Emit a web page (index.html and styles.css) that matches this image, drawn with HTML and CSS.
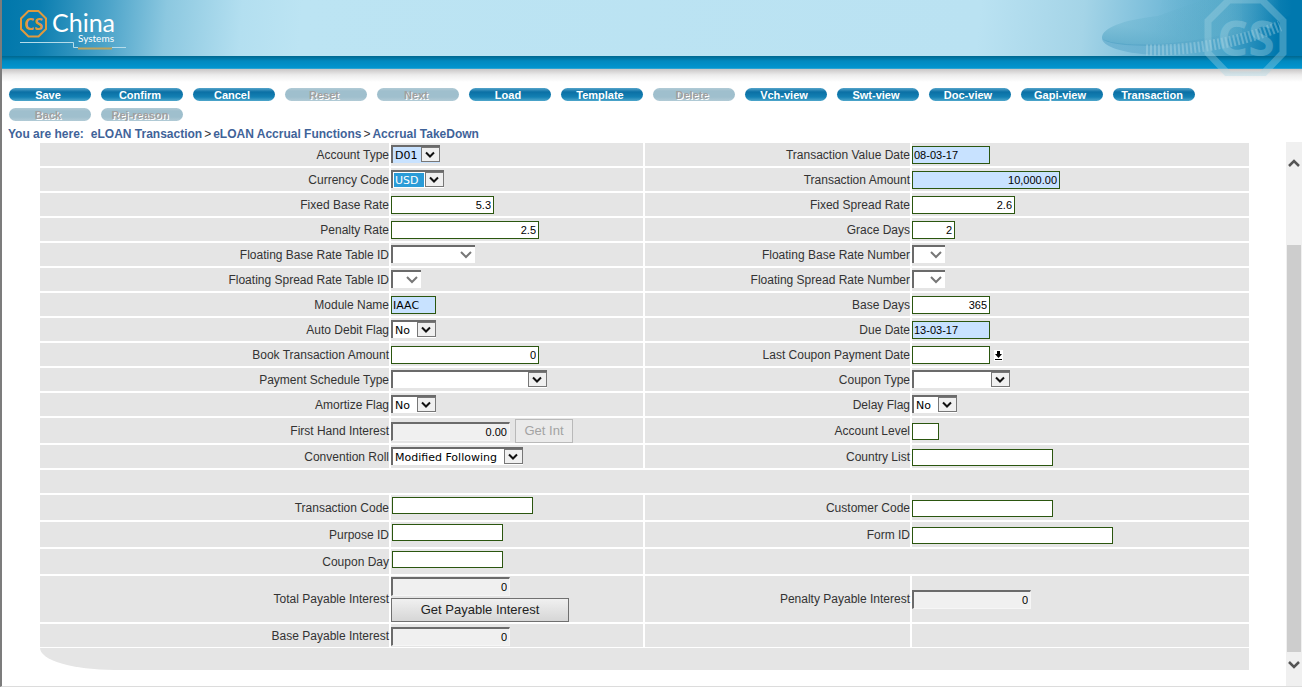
FILE: index.html
```html
<!DOCTYPE html>
<html lang="en">
<head>
<meta charset="utf-8">
<title>Accrual TakeDown</title>
<link rel="stylesheet" href="styles.css">
</head>
<body>
<header class="banner">
  <svg class="logo" width="110" height="56" viewBox="0 0 110 56" role="img" aria-label="China Systems">
    <path d="M9.500 11H19.500L27 18.500V29L19.500 36.500H9.500L2 29V18.500Z" fill="none" stroke="#e09a3e" stroke-width="2"/>
    <text x="14.500" y="29.500" text-anchor="middle" class="logo-cs">CS</text>
    <text x="33" y="32" class="logo-china">China</text>
    <text x="59" y="42" class="logo-systems">Systems</text>
    <path d="M1 42.500H54.500V47.500H59M93 47.500H107" fill="none" stroke="#b5dcea" stroke-width="1"/>
    <path d="M59 48.500H93" stroke="#bda45e" stroke-width="2"/>
  </svg>
  <svg class="watermark" width="210" height="76" viewBox="0 0 210 76" aria-hidden="true">
    <defs>
      <linearGradient id="dome" x1="0" y1="1" x2=".55" y2="0">
        <stop offset="0" stop-color="#5ba9c9" stop-opacity=".9"/>
        <stop offset=".4" stop-color="#5cacc8" stop-opacity=".35"/>
        <stop offset="1" stop-color="#5cacc8" stop-opacity=".1"/>
      </linearGradient>
      <linearGradient id="rim" x1="0" y1="0" x2="1" y2="0">
        <stop offset="0" stop-color="#4c9dc3" stop-opacity=".5"/>
        <stop offset="1" stop-color="#4c9dc3" stop-opacity="0"/>
      </linearGradient>
      <linearGradient id="glow" x1="0" y1="0" x2="1" y2="0">
        <stop offset="0" stop-color="#6ab4cf" stop-opacity="0"/>
        <stop offset=".5" stop-color="#62b0cc" stop-opacity=".5"/>
        <stop offset="1" stop-color="#62b0cc" stop-opacity="0"/>
      </linearGradient>
    </defs>
    <path d="M70 0H200V14C160 36 110 44 60 44Z" fill="url(#glow)"/>
    <path d="M10 38C10 28 30 20 66 16L110 0H150V36C110 44 85 46 60 46C25 46 12 42 10 38Z" fill="url(#dome)"/>
    <path d="M10 38C18 48 110 50 194 15V28C150 48 100 56 62 55C28 53 10 46 10 38Z" fill="url(#rim)"/>
    <path d="M54 50C100 51 150 42 188 26" fill="none" stroke="#c2e1ec" stroke-opacity=".35" stroke-width="11" stroke-dasharray="2 2"/>
    <g class="seal">
      <path d="M137 0H170L191 21V53L170 75H137L116 53V21Z" fill="none" stroke="#a8d6e4" stroke-width="7"/>
      <text x="154" y="56" text-anchor="middle" class="seal-text">CS</text>
    </g>
  </svg>
</header>

<nav class="toolbar" aria-label="Actions">
  <button type="button">Save</button>
  <button type="button">Confirm</button>
  <button type="button">Cancel</button>
  <button type="button" disabled>Reset</button>
  <button type="button" disabled>Next</button>
  <button type="button">Load</button>
  <button type="button">Template</button>
  <button type="button" disabled>Delete</button>
  <button type="button">Vch-view</button>
  <button type="button">Swt-view</button>
  <button type="button">Doc-view</button>
  <button type="button">Gapi-view</button>
  <button type="button">Transaction</button>
  <button type="button" disabled>Back</button>
  <button type="button" disabled>Rej-reason</button>
</nav>

<nav class="crumbs" aria-label="Breadcrumb">
  <span class="here">You are here:</span>
  <a href="#">eLOAN Transaction</a>
  <span class="sep">&gt;</span>
  <a href="#">eLOAN Accrual Functions</a>
  <span class="sep">&gt;</span>
  <a href="#">Accrual TakeDown</a>
</nav>

<main class="workspace">
  <form class="form">
    <div class="row">
      <label for="acct-type">Account Type</label>
      <div class="field"><select id="acct-type" class="w49 required"><option>D01</option></select></div>
      <label for="value-date">Transaction Value Date</label>
      <div class="field"><input id="value-date" class="w78 required" value="08-03-17"></div>
    </div>
    <div class="row">
      <label for="currency">Currency Code</label>
      <div class="field"><select id="currency" class="w53 selected"><option>USD</option></select></div>
      <label for="amount">Transaction Amount</label>
      <div class="field"><input id="amount" class="w148 required num" value="10,000.00"></div>
    </div>
    <div class="row">
      <label for="base-rate">Fixed Base Rate</label>
      <div class="field"><input id="base-rate" class="w103 num" value="5.3"></div>
      <label for="spread-rate">Fixed Spread Rate</label>
      <div class="field"><input id="spread-rate" class="w103 num" value="2.6"></div>
    </div>
    <div class="row">
      <label for="penalty-rate">Penalty Rate</label>
      <div class="field"><input id="penalty-rate" class="w148 num" value="2.5"></div>
      <label for="grace">Grace Days</label>
      <div class="field"><input id="grace" class="w43 num" value="2"></div>
    </div>
    <div class="row">
      <label for="fbr-table">Floating Base Rate Table ID</label>
      <div class="field"><select id="fbr-table" class="w84" disabled><option></option></select></div>
      <label for="fbr-number">Floating Base Rate Number</label>
      <div class="field"><select id="fbr-number" class="w33" disabled><option></option></select></div>
    </div>
    <div class="row">
      <label for="fsr-table">Floating Spread Rate Table ID</label>
      <div class="field"><select id="fsr-table" class="w30" disabled><option></option></select></div>
      <label for="fsr-number">Floating Spread Rate Number</label>
      <div class="field"><select id="fsr-number" class="w33" disabled><option></option></select></div>
    </div>
    <div class="row">
      <label for="module">Module Name</label>
      <div class="field"><input id="module" class="w45 required wide-face" value="IAAC"></div>
      <label for="base-days">Base Days</label>
      <div class="field"><input id="base-days" class="w78 num" value="365"></div>
    </div>
    <div class="row">
      <label for="auto-debit">Auto Debit Flag</label>
      <div class="field"><select id="auto-debit" class="w45"><option>No</option></select></div>
      <label for="due-date">Due Date</label>
      <div class="field"><input id="due-date" class="w78 required" value="13-03-17"></div>
    </div>
    <div class="row">
      <label for="book-amount">Book Transaction Amount</label>
      <div class="field"><input id="book-amount" class="w148 num" value="0"></div>
      <label for="last-coupon">Last Coupon Payment Date</label>
      <div class="field">
        <input id="last-coupon" class="w78">
        <button type="button" class="picker" aria-label="Pick date">
          <svg width="9" height="11" viewBox="0 0 9 11"><path d="M3 1H6V4H8L4.500 8L1 4H3Z M1 9H8V10H1Z" fill="#000"/></svg>
        </button>
      </div>
    </div>
    <div class="row">
      <label for="schedule">Payment Schedule Type</label>
      <div class="field"><select id="schedule" class="w156"><option></option></select></div>
      <label for="coupon-type">Coupon Type</label>
      <div class="field"><select id="coupon-type" class="w98"><option></option></select></div>
    </div>
    <div class="row">
      <label for="amortize">Amortize Flag</label>
      <div class="field"><select id="amortize" class="w45"><option>No</option></select></div>
      <label for="delay">Delay Flag</label>
      <div class="field"><select id="delay" class="w45"><option>No</option></select></div>
    </div>
    <div class="row mid">
      <label for="first-hand">First Hand Interest</label>
      <div class="field"><input id="first-hand" class="w119 num" value="0.00" readonly><button type="button" class="get-int" disabled>Get Int</button></div>
      <label for="acct-level">Account Level</label>
      <div class="field"><input id="acct-level" class="w27 short"></div>
    </div>
    <div class="row">
      <label for="convention">Convention Roll</label>
      <div class="field"><select id="convention" class="w132"><option>Modified Following</option></select></div>
      <label for="country">Country List</label>
      <div class="field"><input id="country" class="w141 short"></div>
    </div>
    <div class="row"><div class="blank full"></div></div>
    <div class="row mid">
      <label for="txn-code">Transaction Code</label>
      <div class="field raised"><input id="txn-code" class="w141 short"></div>
      <label for="customer">Customer Code</label>
      <div class="field"><input id="customer" class="w141 short"></div>
    </div>
    <div class="row mid">
      <label for="purpose">Purpose ID</label>
      <div class="field raised"><input id="purpose" class="w111 short"></div>
      <label for="form-id">Form ID</label>
      <div class="field"><input id="form-id" class="w201 short"></div>
    </div>
    <div class="row mid">
      <label for="coupon-day">Coupon Day</label>
      <div class="field raised"><input id="coupon-day" class="w111 short"></div>
      <div class="blank half"></div>
    </div>
    <div class="row">
      <label for="total-payable">Total Payable Interest</label>
      <div class="field stacked">
        <input id="total-payable" class="w119 num" value="0" readonly>
        <button type="button" class="get-payable">Get Payable Interest</button>
      </div>
      <label for="penalty-payable">Penalty Payable Interest</label>
      <div class="field"><input id="penalty-payable" class="w119 num" value="0" readonly></div>
    </div>
    <div class="row last">
      <label for="base-payable">Base Payable Interest</label>
      <div class="field"><input id="base-payable" class="w119 num" value="0" readonly></div>
      <div class="blank"></div>
      <div class="blank"></div>
    </div>
    <div class="tail"></div>
  </form>
  <div class="scrollbar">
    <button type="button" class="scroll-up" aria-label="Scroll up"><svg width="12" height="9" viewBox="0 0 12 9"><path d="M1 7L6 2L11 7" fill="none" stroke="#555" stroke-width="2.500"/></svg></button>
    <div class="track"><div class="thumb"></div></div>
    <button type="button" class="scroll-down" aria-label="Scroll down"><svg width="12" height="9" viewBox="0 0 12 9"><path d="M1 2L6 7L11 2" fill="none" stroke="#555" stroke-width="2.500"/></svg></button>
  </div>
</main>
</body>
</html>
```

FILE: styles.css
```css
* {
  box-sizing: border-box;
}

body {
  margin: 0;
  min-height: 100vh;
  display: flex;
  flex-direction: column;
  border-left: 2px solid #7c7c7c;
  border-bottom: 1px solid #dcdcdc;
  background: #fff;
  color: #333;
  font: 12px/16px "Liberation Sans", Arial, sans-serif;
}

button,
input,
select {
  margin: 0;
  padding: 0;
  border-radius: 0;
  font: inherit;
}

/* Banner */

.banner {
  position: relative;
  height: 82px;
  background:
    linear-gradient(#00678f, #0089bf 5px, #0095cf 12px, #55b0d2 13px) 0 56px / 100% 13px no-repeat,
    linear-gradient(#c9c6c6, #ececec 6px, #fff 13px) 0 69px / 100% 13px no-repeat,
    linear-gradient(95deg, #0077ab 0, #0b7eb0 38px, #4ba3c9 105px, #8cc8e0 165px, #b3dff0 240px, #bce4f3 300px, #bae2f2 75%, #a4d4e7 83%, #7dbfdb 88%, #4ca5c9 94%, #0078ae 98%) 0 0 / 100% 56px no-repeat;
}

.logo {
  display: block;
  margin-left: 17px;
}

.logo-cs {
  fill: #e09a3e;
  font: bold 16px "Noto Sans", sans-serif;
}

.logo-china {
  fill: #fff;
  font: 25px Lato, sans-serif;
}

.logo-systems {
  fill: #fff;
  font: 10px Lato, sans-serif;
}

.watermark {
  position: absolute;
  top: 0;
  right: 0;
}

.seal {
  opacity: .35;
}

.seal-text {
  fill: #a8d6e4;
  font: bold 48px "Noto Sans", sans-serif;
}

/* Toolbar */

.toolbar {
  display: flex;
  flex-wrap: wrap;
  gap: 7px 10px;
  padding: 6px 90px 0 7px;
}

.toolbar button {
  width: 82px;
  height: 13px;
  border: 0;
  border-radius: 7px;
  background: linear-gradient(#56a5cb, #0b70a5 4px, #1380b3 9px, #4fa6cb);
  color: #fff;
  font-size: 11px;
  font-weight: bold;
  line-height: 12px;
  padding-right: 4px;
}

.toolbar button:disabled {
  background: linear-gradient(#b2cbd6, #9fbfcd 3px, #9fbfcd 9px, #b2cbd6);
  color: #a0a0a0;
  text-shadow: 1px 1px #fff;
}

.crumbs {
  display: flex;
  gap: 2px;
  padding: 5px 6px 0;
  color: #3f6399;
  font-size: 12px;
  font-weight: bold;
}

.crumbs a {
  color: inherit;
  text-decoration: none;
}

.here {
  margin-right: 5px;
}

.sep {
  color: #333;
  font-weight: normal;
}

/* Form */

.workspace {
  flex: 1;
  display: flex;
}

.form {
  flex: 1;
  display: flex;
  flex-direction: column;
  gap: 2px;
  padding: 1px 37px 16px 38px;
}

.row {
  display: grid;
  grid-template-columns: 349fr 252fr 265fr 337fr;
  gap: 2px;
  min-height: 23px;
}

.row.mid {
  min-height: 25px;
}

.row > * {
  min-width: 0;
  display: flex;
  align-items: center;
  background: #e5e5e5;
}

label {
  justify-content: flex-end;
}

.field {
  padding-top: 1px;
}

.field.raised {
  align-items: flex-start;
  padding: 2px 0 0 1px;
}

.field.stacked {
  flex-direction: column;
  align-items: flex-start;
  gap: 2px;
}

.full {
  grid-column: 1 / -1;
}

.half {
  grid-column: span 2;
}

.row.last {
  margin-bottom: -1px;
}

.tail {
  height: 22px;
  border-bottom-left-radius: 74px 22px;
  background: #e5e5e5;
}

input {
  height: 18px;
  padding: 0 2px 0 1px;
  border: 1px solid #2b560f;
  background: #fff;
  color: #000;
  font-size: 11px;
}

input.short {
  height: 17px;
}

input.num {
  text-align: right;
}

input[readonly] {
  height: 19px;
  border: 2px solid;
  border-color: #6b6b6b #f6f6f6 #f6f6f6 #6b6b6b;
  border-width: 2px 1px 1px 2px;
  background: #f0f0f0;
}

.required {
  background-color: #c8e2ff;
}

input.wide-face {
  font-family: "DejaVu Sans", Verdana, sans-serif;
}

select {
  appearance: none;
  height: 18px;
  margin-bottom: 2px;
  padding-left: 2px;
  border: solid #6b6b6b;
  border-width: 2px 0 0 2px;
  background: #fff url("data:image/svg+xml,%3Csvg xmlns='http://www.w3.org/2000/svg' width='19' height='15'%3E%3Crect x='.5' y='.5' width='18' height='14' fill='%23f0f0f0' stroke='%23777'/%3E%3Cpath d='M5 5.500L9 9.500L13 5.500' fill='none' stroke='%23111' stroke-width='2'/%3E%3C/svg%3E") right top no-repeat;
  color: #000;
  font-family: "DejaVu Sans", Verdana, sans-serif;
  font-size: 11px;
  line-height: 15px;
}

select.required {
  background-color: #c8e2ff;
}

select.selected {
  background-image:
    url("data:image/svg+xml,%3Csvg xmlns='http://www.w3.org/2000/svg' width='19' height='15'%3E%3Crect x='.5' y='.5' width='18' height='14' fill='%23f0f0f0' stroke='%23777'/%3E%3Cpath d='M5 5.500L9 9.500L13 5.500' fill='none' stroke='%23111' stroke-width='2'/%3E%3C/svg%3E"),
    linear-gradient(#2a9bd7, #2a9bd7);
  background-position: right top, 1px 1px;
  background-size: auto, calc(100% - 21px) calc(100% - 2px);
  color: #fff;
}

select:disabled {
  opacity: 1;
  background-image: url("data:image/svg+xml,%3Csvg xmlns='http://www.w3.org/2000/svg' width='19' height='15'%3E%3Cpath d='M5 5L10 10L15 5' fill='none' stroke='%23777' stroke-width='2'/%3E%3C/svg%3E");
}

.picker {
  display: flex;
  margin-left: 4px;
  border: 0;
  background: #fff;
}

.get-int {
  width: 58px;
  height: 24px;
  margin-left: 5px;
  border: 1px solid #b9b9b9;
  background: #eaeaea;
  color: #a3a3a3;
}

.get-payable {
  width: 178px;
  height: 24px;
  border: 1px solid #707070;
  background: linear-gradient(#f0f0f0, #d6d6d6);
  color: #222;
}

.get-int,
.get-payable {
  font-size: 13px;
}

.w27 { width: 27px; }
.w30 { width: 30px; }
.w33 { width: 33px; }
.w43 { width: 43px; }
.w45 { width: 45px; }
.w49 { width: 49px; }
.w53 { width: 53px; }
.w78 { width: 78px; }
.w84 { width: 84px; }
.w98 { width: 98px; }
.w103 { width: 103px; }
.w111 { width: 111px; }
.w119 { width: 119px; }
.w132 { width: 132px; }
.w141 { width: 141px; }
.w148 { width: 148px; }
.w156 { width: 156px; }
.w201 { width: 201px; }

/* Scrollbar */

.scrollbar {
  width: 16px;
  display: flex;
  flex-direction: column;
  padding: 0 1px;
  background: #f0f0f0;
}

.scrollbar button {
  display: flex;
  justify-content: center;
  align-items: center;
  border: 0;
  background: none;
}

.scroll-up {
  height: 42px;
}

.scroll-down {
  height: 34px;
  padding-bottom: 10px;
}

.track {
  flex: 1;
  display: flex;
  flex-direction: column;
  justify-content: flex-end;
}

.thumb {
  height: 87%;
  background: #cdcdcd;
}
```
